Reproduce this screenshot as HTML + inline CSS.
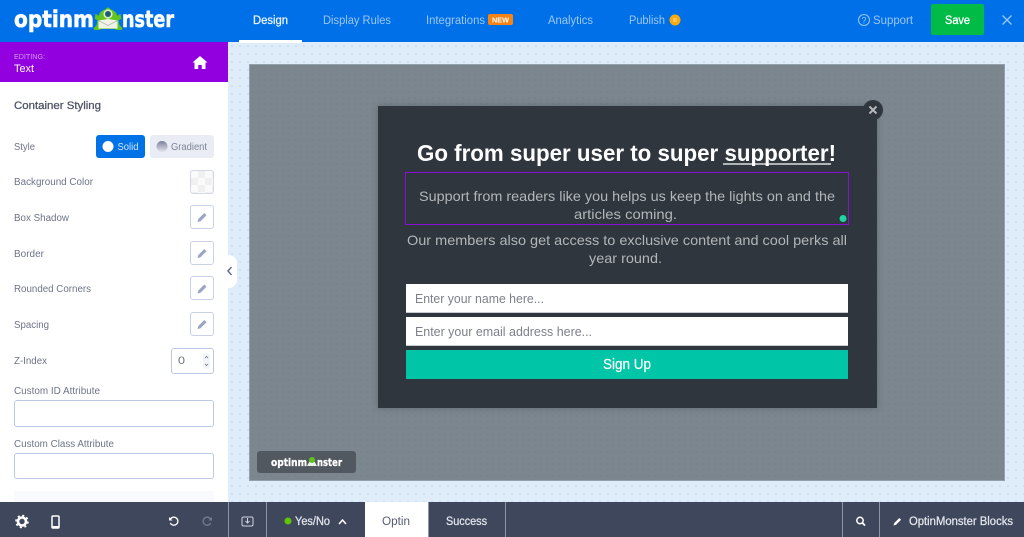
<!DOCTYPE html>
<html><head><meta charset="utf-8"><title>OptinMonster</title>
<style>
html,body{margin:0;padding:0;width:1024px;height:537px;overflow:hidden;background:#fff}
div{position:absolute;box-sizing:border-box}
#top{left:0;top:0;width:1024px;height:42px;background:#0070e8}
#canvas{left:228px;top:42px;width:796px;height:460px;background-color:#dfecf9;background-image:radial-gradient(circle,#c2d7ee 0.7px,transparent 1px);background-size:8px 8px}
#over{left:249px;top:64px;width:756px;height:417px;background-color:#7c868f;background-image:radial-gradient(circle,#767f89 0.6px,transparent .9px);background-size:6px 6px;border:1px solid #93a0ad}
#side{left:0;top:42px;width:228px;height:460px;background:#fff}
#purple{left:0;top:42px;width:228px;height:40px;background:#9300e0}
#pop{left:378px;top:106px;width:499px;height:302px;background:#2f363e;box-shadow:0 0 6px rgba(60,70,80,.45)}
#sel{left:405px;top:172px;width:444px;height:53px;border:1.5px solid #8a10d8}
.in{left:406px;width:442px;height:29px;background:#fff;border-bottom:1px solid #c9ccd1}
#btn{left:406px;top:350px;width:442px;height:29px;background:#00c6a7}
#bar{left:0;top:502px;width:1024px;height:35px;background:#3f475c}
.sep{top:502px;width:1px;height:35px;background:#8d94a6}
.pb{left:190px;width:24px;height:24px;border:1px solid #c8d1e6;border-radius:3px;background:#fff}
.inp{left:14px;width:200px;border:1px solid #bdc9e2;border-radius:3px;background:#fff}
#wrap{left:0;top:0;width:1024px;height:537px;filter:blur(.3px)}
svg{position:absolute;left:0;top:0}
text{font-family:"Liberation Sans",sans-serif}
.dj text{font-family:"DejaVu Sans",sans-serif}
</style></head><body>
<div id="wrap">
<div id="top"></div>
<div id="canvas"></div>
<div id="over"></div>
<div id="side"></div>
<div id="purple"></div>
<div style="left:239px;top:40px;width:63px;height:2.500px;background:#fff"></div>
<div style="left:931px;top:4px;width:53px;height:31px;background:#00bb45;border-radius:2px"></div>
<div style="left:96px;top:135px;width:49px;height:23px;background:#0072e8;border-radius:3px"></div>
<div style="left:150px;top:135px;width:64px;height:23px;background:#e9ecf4;border-radius:3px"></div>
<div style="left:190px;top:170px;width:24px;height:24px;border:1px solid #d2d8e8;border-radius:3px;background-color:#fafafa;background-image:linear-gradient(45deg,#f0f0f0 25%,transparent 25%,transparent 75%,#f0f0f0 75%),linear-gradient(45deg,#f0f0f0 25%,transparent 25%,transparent 75%,#f0f0f0 75%);background-size:14px 14px;background-position:0 0,7px 7px"></div>
<div class="pb" style="top:205px"></div>
<div class="pb" style="top:241px"></div>
<div class="pb" style="top:276px"></div>
<div class="pb" style="top:312px"></div>
<div style="left:171px;top:348px;width:43px;height:26px;border:1px solid #bdc9e2;border-radius:3px;background:#fff"></div>
<div class="inp" style="top:400px;height:27px"></div>
<div class="inp" style="top:453px;height:26px"></div>
<div style="left:14px;top:491px;width:200px;height:11px;background:#f8fafe"></div>
<div style="left:226px;top:255px;width:11px;height:33px;background:#fff;border-radius:0 8px 8px 0"></div>
<div id="pop"></div>
<div id="sel"></div>
<div class="in" style="top:284px"></div>
<div class="in" style="top:317px"></div>
<div id="btn"></div>
<div style="left:257px;top:451px;width:99px;height:22px;background:#52585f;border-radius:3px"></div>
<div id="bar"></div>
<div style="left:365px;top:502px;width:63px;height:35px;background:#fff"></div>
<div class="sep" style="left:228px"></div>
<div class="sep" style="left:266px"></div>
<div class="sep" style="left:428px"></div>
<div class="sep" style="left:505px"></div>
<div class="sep" style="left:842px"></div>
<div class="sep" style="left:879px"></div>

<svg width="1024" height="537" viewBox="0 0 1024 537">
<!-- logo -->
<g class="dj" font-size="23" font-weight="700" fill="#fff" stroke="#fff" stroke-width=".6">
<text x="14" y="27" textLength="80" lengthAdjust="spacingAndGlyphs">optinm</text>
<text x="122" y="27" textLength="52" lengthAdjust="spacingAndGlyphs">nster</text>
</g>
<path d="M108 7.500c1.500 0 2 1 2 1.800 4 .7 6.500 3.500 7.500 6.500l3-2 .8 5-2.800 1.500 1 5 3 3-1 1.700h-5l-2-1h-13l-2 1h-5l-1-1.700 3-3 1-5-2.800-1.500.8-5 3 2c1-3 3.500-5.800 7.500-6.500 0-.8.500-1.800 2-1.800z" fill="#62c51f"/>
<circle cx="108" cy="14" r="4.600" fill="#d9f0c4"/><circle cx="108" cy="14" r="3" fill="#1f5a78"/>
<path d="M98.500 20.500l9.500-1.500 9.500 1.500v8h-19z" fill="#f1f3ea"/><path d="M98.500 20.500l9.500 5 9.500-5" fill="none" stroke="#b4baa9" stroke-width=".8"/>
<!-- nav -->
<text x="253" y="24" font-size="11.500" fill="#eef5fe" stroke="#eef5fe" stroke-width=".25" textLength="35" lengthAdjust="spacingAndGlyphs">Design</text>
<g font-size="11.500" fill="#9cc6f5">
<text x="323" y="24" textLength="68" lengthAdjust="spacingAndGlyphs">Display Rules</text>
<text x="426" y="24" textLength="59" lengthAdjust="spacingAndGlyphs">Integrations</text>
<text x="548" y="24" textLength="45" lengthAdjust="spacingAndGlyphs">Analytics</text>
<text x="629" y="24" textLength="36" lengthAdjust="spacingAndGlyphs">Publish</text>
<text x="873" y="24" textLength="40" lengthAdjust="spacingAndGlyphs">Support</text>
</g>
<rect x="488" y="14" width="25" height="11" rx="2" fill="#f98214"/>
<text x="492" y="22.500" font-size="7" font-weight="700" fill="#fff" textLength="17" lengthAdjust="spacingAndGlyphs">NEW</text>
<circle cx="675" cy="20" r="5.500" fill="#f9a80e"/><path d="M674 18v4M676 18v4" stroke="#fde0a0" stroke-width="1"/>
<circle cx="864" cy="20" r="5.500" fill="none" stroke="#9cc6f5" stroke-width="1"/>
<text x="861.500" y="23.500" font-size="9" fill="#9cc6f5">?</text>
<text x="945" y="24" font-size="11.500" fill="#fff" stroke="#fff" stroke-width=".3" textLength="25" lengthAdjust="spacingAndGlyphs">Save</text>
<path d="M1002.500 15.500l9 9M1011.500 15.500l-9 9" stroke="#9cc6f5" stroke-width="1.300" fill="none"/>
<!-- purple -->
<text x="14" y="59" font-size="7" fill="#d29bf2" textLength="31" lengthAdjust="spacingAndGlyphs">EDITING:</text>
<text x="14" y="72" font-size="11" fill="#fff" textLength="20" lengthAdjust="spacingAndGlyphs">Text</text>
<path d="M200 56l7.500 6.500h-2V69h-3.700v-4h-3.600v4h-3.700v-6.500h-2z" fill="#fff"/>
<!-- sidebar -->
<text x="14" y="109" font-size="11" fill="#50566a" stroke="#50566a" stroke-width=".3" textLength="87" lengthAdjust="spacingAndGlyphs">Container Styling</text>
<g font-size="10" fill="#6d7488">
<text x="14" y="150" textLength="21" lengthAdjust="spacingAndGlyphs">Style</text>
<text x="14" y="185" textLength="79" lengthAdjust="spacingAndGlyphs">Background Color</text>
<text x="14" y="221" textLength="55" lengthAdjust="spacingAndGlyphs">Box Shadow</text>
<text x="14" y="257" textLength="30" lengthAdjust="spacingAndGlyphs">Border</text>
<text x="14" y="292" textLength="77" lengthAdjust="spacingAndGlyphs">Rounded Corners</text>
<text x="14" y="328" textLength="35" lengthAdjust="spacingAndGlyphs">Spacing</text>
<text x="14" y="364" textLength="33" lengthAdjust="spacingAndGlyphs">Z-Index</text>
<text x="14" y="394" textLength="86" lengthAdjust="spacingAndGlyphs">Custom ID Attribute</text>
<text x="14" y="447" textLength="100" lengthAdjust="spacingAndGlyphs">Custom Class Attribute</text>
<text x="178" y="364" font-size="11" textLength="7" lengthAdjust="spacingAndGlyphs">0</text>
<text x="171" y="150" fill="#7d8497" textLength="36" lengthAdjust="spacingAndGlyphs">Gradient</text>
</g>
<circle cx="108" cy="146.500" r="5.500" fill="#fff"/>
<text x="117.500" y="150" font-size="10" fill="#d3e5fb" textLength="21" lengthAdjust="spacingAndGlyphs">Solid</text>
<defs><linearGradient id="g" x1="0" y1="0" x2="0" y2="1"><stop offset="0" stop-color="#7b8198"/><stop offset="1" stop-color="#e3e6ef"/></linearGradient></defs>
<circle cx="162" cy="146.500" r="5.500" fill="url(#g)"/>
<g fill="#9aa4c4">
<path d="M197.500 222l.8-3 6-6 2.200 2.200-6 6z"/>
<path d="M197.500 258l.8-3 6-6 2.200 2.200-6 6z"/>
<path d="M197.500 293.500l.8-3 6-6 2.200 2.200-6 6z"/>
<path d="M197.500 329l.8-3 6-6 2.200 2.200-6 6z"/>
</g>
<rect x="203" y="353" width="7" height="16" rx="3" fill="#f1f3f8"/>
<path d="M205 358l1.500-1.500 1.500 1.500M205 364l1.500 1.500 1.500-1.500" stroke="#6d7488" stroke-width=".8" fill="none"/>
<path d="M231.500 267l-3.500 4 3.500 4" stroke="#67708a" stroke-width="1.500" fill="none"/>
<!-- popup -->
<circle cx="873" cy="110" r="10" fill="#2f363e"/>
<path d="M869.500 106.500l7 7M876.500 106.500l-7 7" stroke="#b5b8bb" stroke-width="2"/>
<text x="417" y="161" font-size="23" font-weight="700" fill="#fff" textLength="419" lengthAdjust="spacingAndGlyphs">Go from super user to super supporter!</text>
<path d="M723 164h108" stroke="#fff" stroke-width="1.300"/>
<g font-size="14" fill="#b3b6b9">
<text x="419" y="201" textLength="416" lengthAdjust="spacingAndGlyphs">Support from readers like you helps us keep the lights on and the</text>
<text x="574" y="219" textLength="103" lengthAdjust="spacingAndGlyphs">articles coming.</text>
<text x="407" y="245" textLength="440" lengthAdjust="spacingAndGlyphs">Our members also get access to exclusive content and cool perks all</text>
<text x="589" y="263" textLength="73" lengthAdjust="spacingAndGlyphs">year round.</text>
</g>
<circle cx="843" cy="218.500" r="3.500" fill="#1fd3a2"/>
<g font-size="13" fill="#7d7f8a">
<text x="415" y="303" textLength="129" lengthAdjust="spacingAndGlyphs">Enter your name here...</text>
<text x="415" y="336" textLength="177" lengthAdjust="spacingAndGlyphs">Enter your email address here...</text>
</g>
<text x="603" y="369" font-size="14.500" fill="#fff" stroke="#fff" stroke-width=".2" textLength="48" lengthAdjust="spacingAndGlyphs">Sign Up</text>
<!-- badge -->
<g class="dj" font-size="10.500" font-weight="700" fill="#fff" stroke="#fff" stroke-width=".3">
<text x="271" y="466" textLength="36" lengthAdjust="spacingAndGlyphs">optinm</text>
<text x="317" y="466" textLength="25" lengthAdjust="spacingAndGlyphs">nster</text>
</g>
<path d="M312 457l5 9h-10z" fill="#e9f2e6"/><circle cx="312" cy="460" r="3" fill="#5cc21c"/>
<!-- bottom bar -->
<circle cx="22" cy="521.500" r="4" fill="none" stroke="#fff" stroke-width="2.600"/>
<circle cx="22" cy="521.500" r="6" fill="none" stroke="#fff" stroke-width="1.600" stroke-dasharray="2.200 2.500"/>
<rect x="52" y="516" width="7" height="12" rx="1" fill="none" stroke="#fff" stroke-width="1.500"/>
<rect x="52" y="526" width="7" height="2" fill="#fff"/>
<path d="M170.500 519a4 4 0 1 1-.2 4" fill="none" stroke="#fff" stroke-width="1.300"/><path d="M169 517v3.500h3.500z" fill="#fff"/>
<path d="M210.500 519a4 4 0 1 0 .2 4" fill="none" stroke="#757c8e" stroke-width="1.300"/><path d="M212 517v3.500h-3.500z" fill="#757c8e"/>
<rect x="242" y="517" width="11" height="9" rx="1.500" fill="none" stroke="#cfd3dc" stroke-width="1"/>
<path d="M247.500 518v5M245.500 521l2 2 2-2" fill="none" stroke="#cfd3dc" stroke-width="1"/>
<circle cx="288" cy="521" r="3.500" fill="#62c400"/>
<text x="295" y="525" font-size="11.500" fill="#e3e6ec" stroke="#e3e6ec" stroke-width=".25" textLength="35" lengthAdjust="spacingAndGlyphs">Yes/No</text>
<path d="M339 524l3.500-4 3.500 4" fill="none" stroke="#fff" stroke-width="1.500"/>
<text x="382" y="525" font-size="11.500" fill="#565d72" textLength="28" lengthAdjust="spacingAndGlyphs">Optin</text>
<text x="446" y="525" font-size="11.500" fill="#e3e6ec" stroke="#e3e6ec" stroke-width=".25" textLength="41" lengthAdjust="spacingAndGlyphs">Success</text>
<circle cx="860" cy="520.500" r="3.200" fill="none" stroke="#fff" stroke-width="1.500"/>
<path d="M862.500 523l2.500 2.500" stroke="#fff" stroke-width="1.800"/>
<path d="M893.500 525.500l.8-2.500 5-5 1.800 1.800-5 5z" fill="#fff"/>
<text x="909" y="525" font-size="11.500" fill="#e3e6ec" stroke="#e3e6ec" stroke-width=".25" textLength="104" lengthAdjust="spacingAndGlyphs">OptinMonster Blocks</text>
</svg>
</div>
</body></html>
